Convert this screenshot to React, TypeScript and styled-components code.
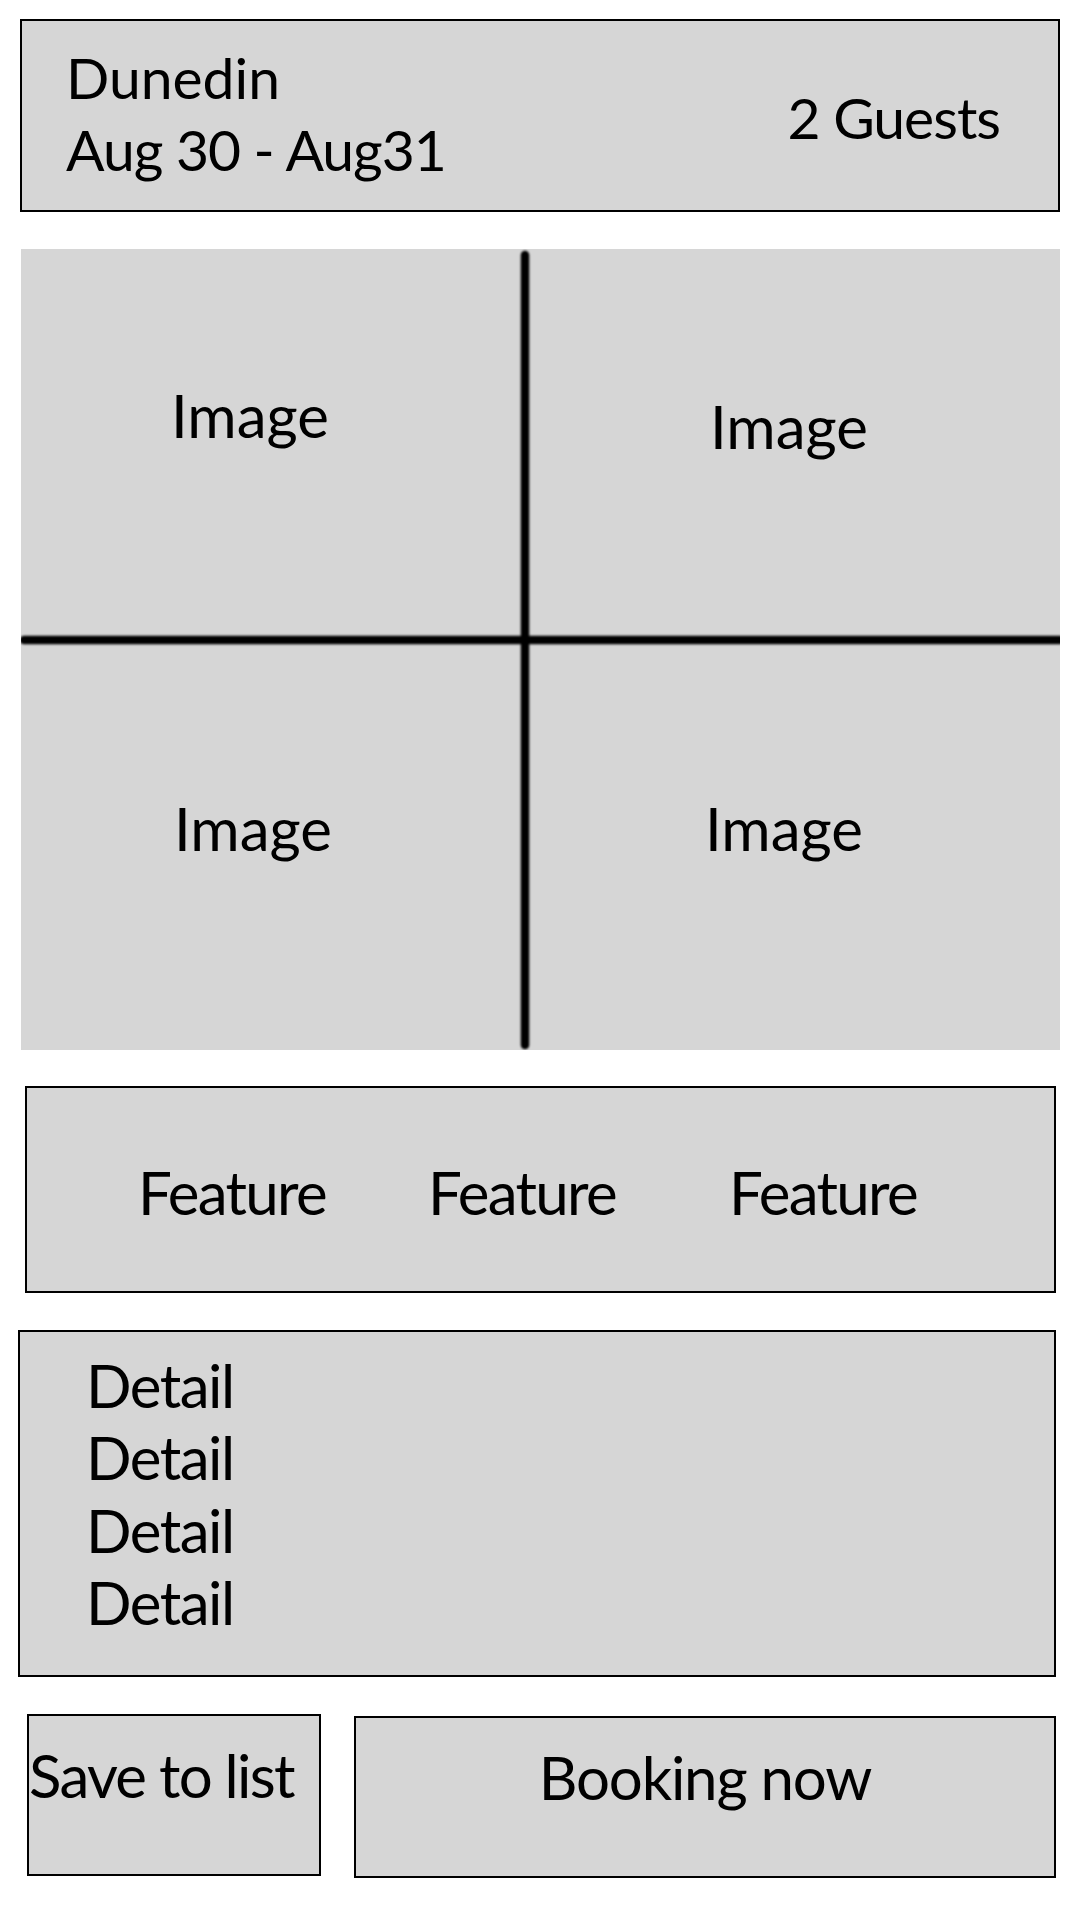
import React from "react";
import styled, { createGlobalStyle } from "styled-components";

const GlobalStyle = createGlobalStyle`
  html, body {
    margin: 0;
    padding: 0;
    background: #ffffff;
  }
  body {
    font-family: Lato, "Open Sans", "Noto Sans", sans-serif;
    color: #000;
  }
`;

const Page = styled.div`
  width: 1080px;
  height: 1920px;
  box-sizing: border-box;
  padding-top: 19px;
  display: flex;
  flex-direction: column;
  font-family: Lato, "Open Sans", "Noto Sans", sans-serif;
  font-size: 60px;
  color: #000;
`;

const Header = styled.header`
  box-sizing: border-box;
  margin-left: 20px;
  width: 1040px;
  height: 193px;
  background: #d6d6d6;
  border: 2px solid #000;
  display: flex;
  justify-content: space-between;
  align-items: flex-start;
  padding: 20px 58px 0 44px;
  font-size: 57px;
`;

const TripInfo = styled.div`
  display: flex;
  flex-direction: column;
  line-height: 72px;
`;

const Dates = styled.span`
  letter-spacing: -1px;
`;

const Guests = styled.div`
  line-height: 72px;
  padding-top: 40px;
  letter-spacing: -1px;
`;

const Gallery = styled.section`
  position: relative;
  margin-top: 37px;
  margin-left: 21px;
  width: 1039px;
  height: 801px;
  background: #d6d6d6;
  display: grid;
  grid-template-columns: 504px 1fr;
  grid-template-rows: 391px 1fr;
`;

const Cell = styled.div<{ $top: number; $left: number }>`
  padding-top: ${(p) => p.$top}px;
  padding-left: ${(p) => p.$left}px;
  line-height: 72px;
`;

const Cross = styled.svg`
  position: absolute;
  inset: 0;
  width: 100%;
  height: 100%;
  pointer-events: none;
`;

const Features = styled.section`
  box-sizing: border-box;
  margin-top: 36px;
  margin-left: 25px;
  width: 1031px;
  height: 207px;
  background: #d6d6d6;
  border: 2px solid #000;
  display: grid;
  grid-template-columns: 290px 290px 312px;
  align-items: center;
  padding: 4px 0 0 60px;
  line-height: 72px;
`;

const FeatureItem = styled.div`
  text-align: center;
  letter-spacing: -1.7px;
`;

const Details = styled.section`
  box-sizing: border-box;
  margin-top: 37px;
  margin-left: 18px;
  width: 1038px;
  height: 347px;
  background: #d6d6d6;
  border: 2px solid #000;
  display: flex;
  flex-direction: column;
  padding: 17px 0 0 66px;
  line-height: 72.3px;
  letter-spacing: -1.5px;
`;

const Actions = styled.div`
  margin-top: 37px;
  margin-left: 27px;
  display: flex;
  gap: 33px;
  align-items: flex-start;
`;

const ActionButton = styled.button<{ $width: number; $offset: number; $align: string }>`
  box-sizing: border-box;
  width: ${(p) => p.$width}px;
  height: 162px;
  margin-top: ${(p) => p.$offset}px;
  background: #d6d6d6;
  border: 2px solid #000;
  border-radius: 0;
  padding: 23px 0 0 0;
  display: flex;
  justify-content: ${(p) => p.$align};
  align-items: flex-start;
  font-family: Lato, "Open Sans", "Noto Sans", sans-serif;
  font-size: 60px;
  line-height: 72px;
  color: #000;
  white-space: nowrap;
  overflow: visible;
  cursor: pointer;
`;

const ButtonLabel = styled.span<{ $spacing: number }>`
  letter-spacing: ${(p) => p.$spacing}px;
`;

const images = [
  { top: 130, left: 150 },
  { top: 141, left: 185 },
  { top: 152, left: 153 },
  { top: 152, left: 180 },
];

export default function App() {
  return (
    <>
      <GlobalStyle />
      <Page>
        <Header>
          <TripInfo>
            <span>Dunedin</span>
            <Dates>Aug 30 - Aug31</Dates>
          </TripInfo>
          <Guests>2 Guests</Guests>
        </Header>

        <Gallery>
          {images.map((pos, i) => (
            <Cell key={i} $top={pos.top} $left={pos.left}>
              Image
            </Cell>
          ))}
          <Cross viewBox="0 0 1039 801" preserveAspectRatio="none">
            <defs>
              <filter id="soft" x="-5%" y="-5%" width="110%" height="110%">
                <feGaussianBlur stdDeviation="0.9" />
              </filter>
            </defs>
            <g stroke="#000" strokeWidth="8.5" strokeLinecap="round" filter="url(#soft)">
              <line x1="504" y1="6" x2="504" y2="796" />
              <line x1="3" y1="391" x2="1039" y2="391" />
            </g>
          </Cross>
        </Gallery>

        <Features>
          <FeatureItem>Feature</FeatureItem>
          <FeatureItem>Feature</FeatureItem>
          <FeatureItem>Feature</FeatureItem>
        </Features>

        <Details>
          <span>Detail</span>
          <span>Detail</span>
          <span>Detail</span>
          <span>Detail</span>
        </Details>

        <Actions>
          <ActionButton $width={294} $offset={0} $align="flex-start">
            <ButtonLabel $spacing={-1.7}>Save to list</ButtonLabel>
          </ActionButton>
          <ActionButton $width={702} $offset={2} $align="center">
            <ButtonLabel $spacing={-1.2}>Booking now</ButtonLabel>
          </ActionButton>
        </Actions>
      </Page>
    </>
  );
}
